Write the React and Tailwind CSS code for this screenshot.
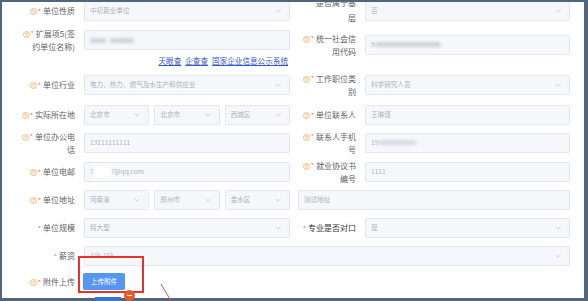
import React from "react";

const Help = () => (
  <svg width="7" height="7" viewBox="0 0 16 16" className="inline-block align-[-1px] mr-[1px]">
    <circle cx="8" cy="8" r="7" fill="#fff8ee" stroke="#eda54e" strokeWidth="1.5" />
    <path d="M6.1 6.3a1.9 1.9 0 1 1 2.7 1.8c-.5.2-.8.6-.8 1.1v.6" fill="none" stroke="#eda54e" strokeWidth="1.5" strokeLinecap="round" />
    <circle cx="8" cy="11.9" r="0.9" fill="#eda54e" />
  </svg>
);

const Star = () => <span className="text-[#f56c6c] text-[7px] mr-[2px] align-top">*</span>;

function Label({ lines, help = true, width = "w-[76px]", pad = "pr-[3px]", color = "text-[#606266]", multiCls = "leading-[13px] mt-[-3px]" }) {
  const multi = lines.length > 1;
  return (
    <div className={`${width} ${pad} h-[20px] shrink-0 text-right text-[8px] ${color}`}>
      <div className={multi ? `${multiCls} whitespace-nowrap` : "leading-[20px] whitespace-nowrap"}>
        {help && <Help />}
        <Star />
        {lines[0]}
        {multi && <br />}
        {multi && lines[1]}
      </div>
    </div>
  );
}

const Chevron = () => (
  <svg width="6" height="4" viewBox="0 0 10 6" className="ml-auto shrink-0">
    <path d="M1 1l4 4 4-4" fill="none" stroke="#c0c4cc" strokeWidth="1.2" />
  </svg>
);

function Field({ children, select, className = "" }) {
  return (
    <div className={`h-[20px] min-w-0 flex items-center pl-[5px] pr-[8px] bg-[#f5f7fa] border border-[#e4e7ed] rounded-[2px] text-[6.6px] text-[#b0b3b9] whitespace-nowrap overflow-hidden ${className}`}>
      <span className="flex items-center">{children}</span>
      {select && <Chevron />}
    </div>
  );
}

const Blur = ({ w, c = "bg-[#cfd2d7]" }) => (
  <span className={`inline-block h-[5px] ${w} ${c} blur-[1.5px] rounded-full`} />
);

function Row({ mb, children }) {
  return <div className={`flex items-start ${mb}`}>{children}</div>;
}

const Left = ({ children }) => <div className="flex items-start w-[288px] gap-[6px]">{children}</div>;
const Right = ({ children, className = "" }) => <div className={`flex items-start ml-[8px] gap-[9px] ${className}`}>{children}</div>;

function Triple({ a, b, c }) {
  return (
    <div className="flex gap-[5px] w-[206px]">
      <Field select className="flex-1">{a}</Field>
      <Field select className="flex-1">{b}</Field>
      <Field select className="flex-1">{c}</Field>
    </div>
  );
}

export default function App() {
  return (
    <div className="relative w-[588px] h-[301px] overflow-hidden bg-white" style={{ fontFamily: '"Noto Sans CJK SC", "Noto Sans", sans-serif' }}>
      <div className="h-full border-l-2 border-t-2 border-r-4 border-b-[3px] border-[#51657f] overflow-hidden">
        <div className="-mt-[1px]">
          <Row mb="mb-[9px]">
            <Left>
              <Label lines={["单位性质"]} />
              <Field select className="w-[206px]">中初新业单位</Field>
            </Left>
            <Right>
              <Label lines={["是否属于基", "层"]} help={false} width="w-[58px]" pad="pr-0" multiCls="leading-[15px] mt-[-6px]" />
              <Field select className="w-[205px]">否</Field>
            </Right>
          </Row>

          <Row mb="mb-0">
            <Left>
              <Label lines={["扩展项5(签", "约单位名称)"]} />
              <Field className="w-[206px]">
                <Blur w="w-[16px]" />
                <span className="w-[4px]" />
                <Blur w="w-[24px]" />
              </Field>
            </Left>
            <Right className="pt-[5px]">
              <Label lines={["统一社会信", "用代码"]} width="w-[58px]" pad="pr-0" />
              <Field className="w-[205px]">
                9<Blur w="w-[66px]" />
              </Field>
            </Right>
          </Row>
          <div className="h-[12px] w-[288px] flex justify-end items-center gap-[4px] pr-[2px] text-[7.6px] text-[#3556c8] underline mb-[8px]">
            <span>天眼查</span>
            <span>企查查</span>
            <span>国家企业信息公示系统</span>
          </div>

          <Row mb="mb-[10px]">
            <Left>
              <Label lines={["单位行业"]} />
              <Field select className="w-[206px]">电力、热力、燃气及水生产和供应业</Field>
            </Left>
            <Right>
              <Label lines={["工作职位类", "别"]} width="w-[58px]" pad="pr-0" />
              <Field select className="w-[205px]">科学研究人员</Field>
            </Right>
          </Row>

          <Row mb="mb-[8px]">
            <Left>
              <Label lines={["实际所在地"]} />
              <Triple a="北京市" b="北京市" c="西城区" />
            </Left>
            <Right>
              <Label lines={["单位联系人"]} width="w-[58px]" pad="pr-0" />
              <Field className="w-[205px]">王琳瑾</Field>
            </Right>
          </Row>

          <Row mb="mb-[9px]">
            <Left>
              <Label lines={["单位办公电", "话"]} />
              <Field className="w-[206px]">13111111111</Field>
            </Left>
            <Right>
              <Label lines={["联系人手机", "号"]} width="w-[58px]" pad="pr-0" />
              <Field className="w-[205px]">
                19<Blur w="w-[38px]" c="bg-[#d8dadf]" />
              </Field>
            </Right>
          </Row>

          <Row mb="mb-[8px]">
            <Left>
              <Label lines={["单位电邮"]} />
              <Field className="w-[206px]">
                3<span className="inline-block w-[17px] h-[12px] bg-white blur-[2px]" />7@qq.com
              </Field>
            </Left>
            <Right>
              <Label lines={["就业协议书", "编号"]} width="w-[58px]" pad="pr-0" />
              <Field className="w-[205px]">1111</Field>
            </Right>
          </Row>

          <Row mb="mb-[8px]">
            <Left>
              <Label lines={["单位地址"]} />
              <Triple a="河南省" b="郑州市" c="金水区" />
            </Left>
            <Right>
              <Field className="w-[272px]">测试地址</Field>
            </Right>
          </Row>

          <Row mb="mb-[8px]">
            <Left>
              <Label lines={["单位规模"]} help={false} />
              <Field select className="w-[206px]">特大型</Field>
            </Left>
            <Right>
              <Label lines={["专业是否对口"]} help={false} width="w-[58px]" pad="pr-0" color="text-[#333333]" />
              <Field select className="w-[205px]">是</Field>
            </Right>
          </Row>

          <Row mb="mb-[7px]">
            <div className="flex items-start gap-[6px]">
              <Label lines={["薪资"]} help={false} />
              <Field select className="w-[486px]">10k-15k</Field>
            </div>
          </Row>

          <Row mb="mb-0">
            <div className="flex items-center gap-[5px] h-[17px]">
              <Label lines={["附件上传"]} />
              <button className="h-[17px] w-[42px] rounded-[2px] bg-[#5796ee] text-white text-[6.6px] leading-[17px]">
                上传附件
              </button>
            </div>
          </Row>
        </div>
      </div>

      <div className="absolute left-[95px] top-[297px] w-[26px] h-[4px] bg-[#3c6fd8]" />
      <div className="absolute left-[78px] top-[256px] w-[66px] h-[37px] border-2 border-[#e3332f]" />
      <div className="absolute left-[124px] top-[290px] w-[11px] h-[11px] rounded-full bg-[#e9572f] flex items-center justify-center">
        <span className="block w-[5px] h-[1.5px] bg-white" />
      </div>
      <svg className="absolute left-[158px] top-[282px]" width="16" height="19" viewBox="0 0 16 19">
        <line x1="3" y1="2" x2="13" y2="19" stroke="#e04848" strokeWidth="1" />
      </svg>
    </div>
  );
}
